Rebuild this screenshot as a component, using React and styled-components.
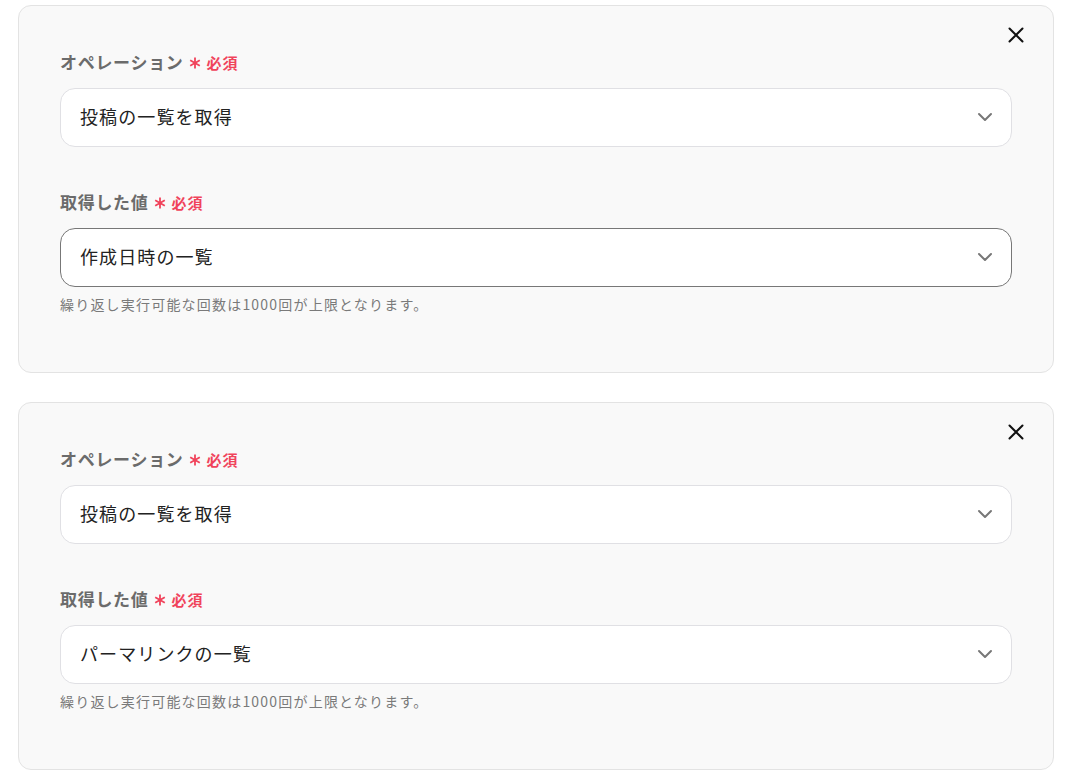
import React, { useState } from "react";
import styled, { createGlobalStyle } from "styled-components";

const GlobalStyle = createGlobalStyle`
  body {
    margin: 0;
    background: #ffffff;
    font-family: "Noto Sans CJK JP", "Noto Sans", sans-serif;
  }
`;

const blocks = [
    { id: 1, operation: "投稿の一覧を取得", value: "作成日時の一覧", focused: true },
    { id: 2, operation: "投稿の一覧を取得", value: "パーマリンクの一覧", focused: false },
];

const CloseIcon = () => (
    <svg width="16" height="16" viewBox="0 0 16 16" fill="none">
        <path d="M1.5 1.5L14.5 14.5M14.5 1.5L1.5 14.5" stroke="#111" strokeWidth="2" strokeLinecap="round" />
    </svg>
);

const ChevronIcon = () => (
    <svg width="16" height="10" viewBox="0 0 16 10" fill="none">
        <path d="M2 2L8 8L14 2" stroke="#777" strokeWidth="2" strokeLinecap="round" strokeLinejoin="round" />
    </svg>
);

const Asterisk = () => (
    <svg width="12" height="12" viewBox="0 0 12 12" fill="none">
        <path d="M6 0.5V11.5M1.2 3.2L10.8 8.8M10.8 3.2L1.2 8.8" stroke="#f0435b" strokeWidth="1.8" />
    </svg>
);

const FieldLabel = ({ children }) => (
    <Label>
        {children}
        <Required>
            <Asterisk />
            必須
        </Required>
    </Label>
);

const Block = ({ item, onRemove }) => (
    <Card>
        <CloseButton onClick={() => onRemove(item.id)}>
            <CloseIcon />
        </CloseButton>
        <Field>
            <FieldLabel>オペレーション</FieldLabel>
            <Select>
                <SelectText>{item.operation}</SelectText>
                <ChevronIcon />
            </Select>
        </Field>
        <Field>
            <FieldLabel>取得した値</FieldLabel>
            <Select focused={item.focused}>
                <SelectText>{item.value}</SelectText>
                <ChevronIcon />
            </Select>
            <Hint>繰り返し実行可能な回数は1000回が上限となります。</Hint>
        </Field>
    </Card>
);

const App = () => {
    const [list, setList] = useState(blocks);

    return (
        <>
            <GlobalStyle />
            <Page>
                {list.map((item) => (
                    <Block key={item.id} item={item} onRemove={(id) => setList(list.filter((b) => b.id !== id))} />
                ))}
            </Page>
        </>
    );
};

const Page = styled.div`
  display: flex;
  flex-direction: column;
  gap: 29px;
  padding: 5px 13px 0 18px;
`;

const Card = styled.div`
  position: relative;
  display: flex;
  flex-direction: column;
  gap: 42px;
  padding: 43px 41px 58px 41px;
  background: #f9f9f9;
  border: 1px solid #e3e3e3;
  border-radius: 13px;
`;

const CloseButton = styled.button`
  position: absolute;
  top: 21px;
  right: 29px;
  padding: 0;
  border: none;
  background: none;
  display: flex;
  cursor: pointer;
`;

const Field = styled.div`
  display: flex;
  flex-direction: column;
`;

const Label = styled.div`
  display: flex;
  align-items: center;
  height: 24px;
  margin-bottom: 15px;
  font-size: 17px;
  font-weight: 700;
  letter-spacing: 0.7px;
  color: #6b6b6b;
`;

const Required = styled.span`
  display: inline-flex;
  align-items: center;
  gap: 6px;
  margin-left: 5px;
  padding-top: 2px;
  font-size: 15px;
  font-weight: 700;
  letter-spacing: 1px;
  color: #f0435b;

  svg {
    margin-top: 2px;
  }
`;

const Select = styled.div`
  display: flex;
  align-items: center;
  justify-content: space-between;
  height: 59px;
  box-sizing: border-box;
  padding: 0 18px 0 19px;
  background: #ffffff;
  border: 1px solid ${props => props.focused ? "#777777" : "#e0e0e4"};
  border-radius: 15px;
  font-size: 18px;
  letter-spacing: 1.1px;
  color: #222222;
  cursor: pointer;

  svg {
    margin-bottom: 1px;
  }
`;

const SelectText = styled.span`
  margin-bottom: 3px;
`;

const Hint = styled.div`
  margin-top: 7px;
  font-size: 14px;
  line-height: 20px;
  letter-spacing: 1.2px;
  color: #7a7a7a;
`;

export default App;
